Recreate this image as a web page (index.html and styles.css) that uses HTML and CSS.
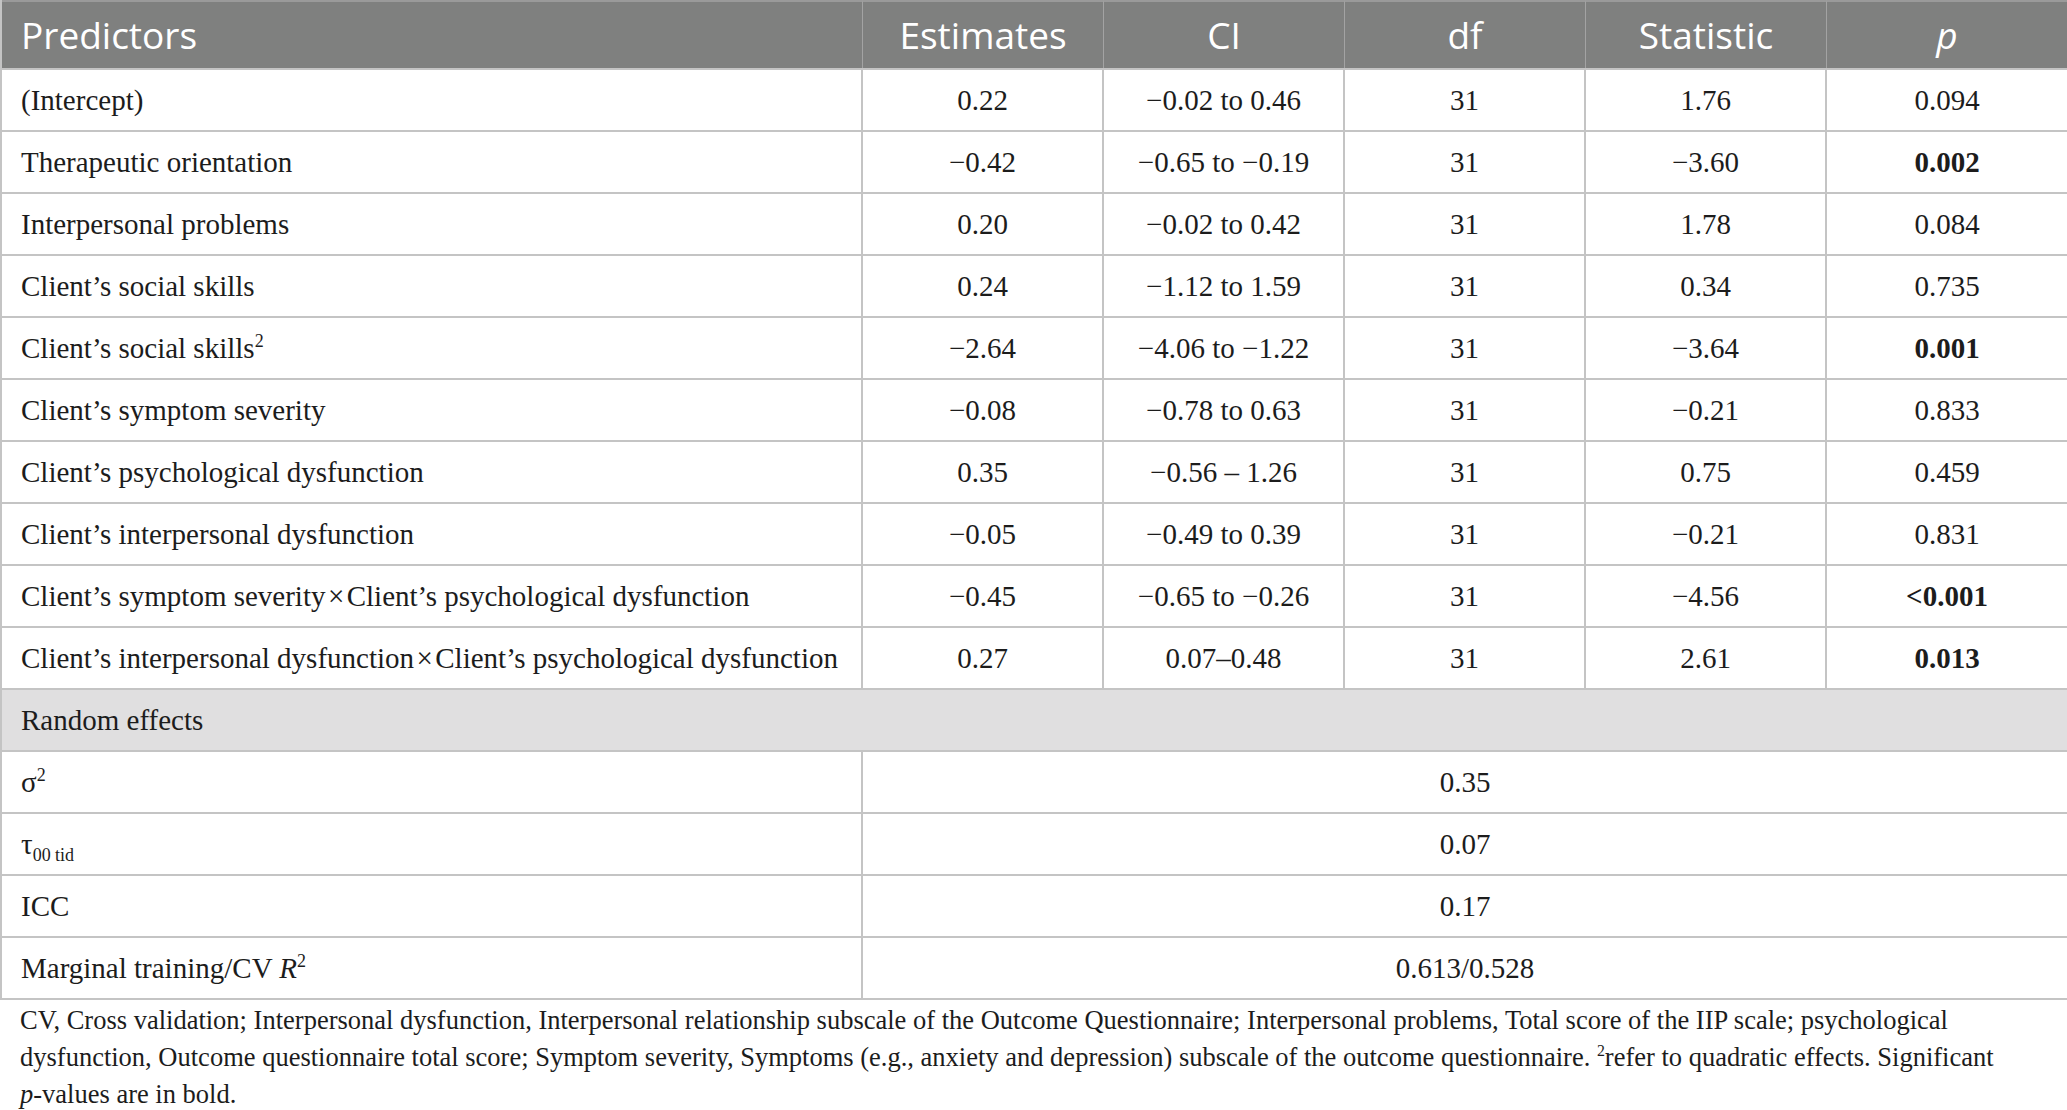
FILE: index.html
```html
<!DOCTYPE html>
<html lang="en">
<head>
<meta charset="utf-8">
<title>Table</title>
<link rel="stylesheet" href="styles.css">
</head>
<body>
<table class="results">
  <colgroup>
    <col class="c-pred">
    <col class="c-num">
    <col class="c-num">
    <col class="c-num">
    <col class="c-num">
    <col class="c-last">
  </colgroup>
  <thead>
    <tr>
      <th class="left">Predictors</th>
      <th>Estimates</th>
      <th>CI</th>
      <th>df</th>
      <th>Statistic</th>
      <th><i>p</i></th>
    </tr>
  </thead>
  <tbody>
    <tr><td class="left">(Intercept)</td><td>0.22</td><td>−0.02 to 0.46</td><td>31</td><td>1.76</td><td>0.094</td></tr>
    <tr><td class="left">Therapeutic orientation</td><td>−0.42</td><td>−0.65 to −0.19</td><td>31</td><td>−3.60</td><td><b>0.002</b></td></tr>
    <tr><td class="left">Interpersonal problems</td><td>0.20</td><td>−0.02 to 0.42</td><td>31</td><td>1.78</td><td>0.084</td></tr>
    <tr><td class="left">Client’s social skills</td><td>0.24</td><td>−1.12 to 1.59</td><td>31</td><td>0.34</td><td>0.735</td></tr>
    <tr><td class="left">Client’s social skills<sup>2</sup></td><td>−2.64</td><td>−4.06 to −1.22</td><td>31</td><td>−3.64</td><td><b>0.001</b></td></tr>
    <tr><td class="left">Client’s symptom severity</td><td>−0.08</td><td>−0.78 to 0.63</td><td>31</td><td>−0.21</td><td>0.833</td></tr>
    <tr><td class="left">Client’s psychological dysfunction</td><td>0.35</td><td>−0.56 – 1.26</td><td>31</td><td>0.75</td><td>0.459</td></tr>
    <tr><td class="left">Client’s interpersonal dysfunction</td><td>−0.05</td><td>−0.49 to 0.39</td><td>31</td><td>−0.21</td><td>0.831</td></tr>
    <tr><td class="left">Client’s symptom severity&#8202;×&#8202;Client’s psychological dysfunction</td><td>−0.45</td><td>−0.65 to −0.26</td><td>31</td><td>−4.56</td><td><b>&lt;0.001</b></td></tr>
    <tr><td class="left">Client’s interpersonal dysfunction&#8202;×&#8202;Client’s psychological dysfunction</td><td>0.27</td><td>0.07–0.48</td><td>31</td><td>2.61</td><td><b>0.013</b></td></tr>
    <tr class="section"><td class="left" colspan="6">Random effects</td></tr>
    <tr><td class="left">σ<sup>2</sup></td><td colspan="5">0.35</td></tr>
    <tr><td class="left">τ<sub>00 tid</sub></td><td colspan="5">0.07</td></tr>
    <tr><td class="left">ICC</td><td colspan="5">0.17</td></tr>
    <tr><td class="left">Marginal training/CV <i>R</i><sup>2</sup></td><td colspan="5">0.613/0.528</td></tr>
  </tbody>
</table>
<p class="note">CV, Cross validation; Interpersonal dysfunction, Interpersonal relationship subscale of the Outcome Questionnaire; Interpersonal problems, Total score of the IIP scale; psychological<br>dysfunction, Outcome questionnaire total score; Symptom severity, Symptoms (e.g., anxiety and depression) subscale of the outcome questionnaire. <sup>2</sup>refer to quadratic effects. Significant<br><i>p</i>-values are in bold.</p>
</body>
</html>
```

FILE: styles.css
```css
html, body {
  margin: 0;
  padding: 0;
  background: #ffffff;
}

body {
  width: 2067px;
  font-family: "Liberation Serif", "Times New Roman", serif;
  color: #1c1c1c;
}

.results {
  width: 2067px;
  table-layout: fixed;
  border-collapse: separate;
  border-spacing: 0;
  border-left: 2px solid #c4c4c4;
}

.c-pred { width: 861px; }
.c-num { width: 241px; }
.c-last { width: 242px; }

.results th {
  background: #7f807f;
  color: #ffffff;
  font-family: "Open Sans", "Noto Sans", sans-serif;
  font-weight: 400;
  font-size: 37px;
  line-height: 66px;
  height: 66px;
  padding: 0;
  text-align: center;
  border-top: 2px solid #9a9a9a;
  border-right: 1px solid #a3a3a3;
  white-space: nowrap;
}

.results th:last-child {
  border-right: 2px solid #9a9a9a;
}

.results th.left {
  text-align: left;
  padding-left: 19px;
}

.results td {
  font-size: 29px;
  line-height: 60px;
  height: 60px;
  padding: 0;
  text-align: center;
  border-top: 2px solid #c4c4c4;
  border-right: 2px solid #c4c4c4;
  white-space: nowrap;
}

.results tbody tr:last-child td {
  border-bottom: 2px solid #c4c4c4;
}

.results td.left {
  text-align: left;
  padding-left: 19px;
}

.results tr.section td {
  background: #e0dfe0;
}

.results b {
  font-weight: 700;
}

sup, sub {
  line-height: 0;
  font-size: 62%;
}

.note {
  margin: 0;
  padding: 2px 0 0 20px;
  font-size: 26.5px;
  line-height: 37px;
  color: #1c1c1c;
  white-space: nowrap;
}

.note sup {
  font-size: 60%;
}
```
